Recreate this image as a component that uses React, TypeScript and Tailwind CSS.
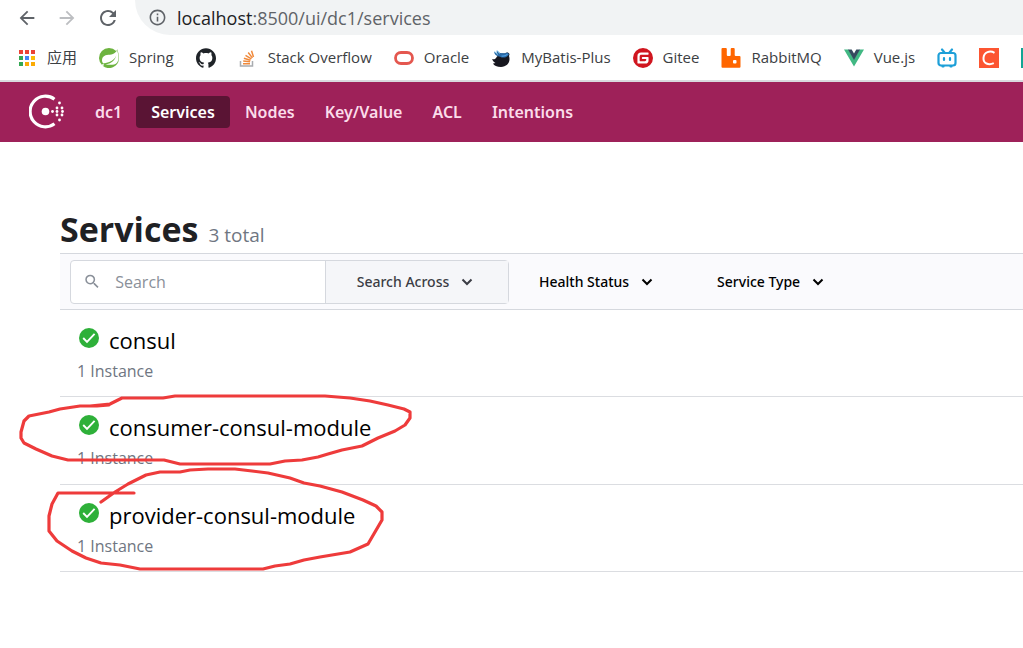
import type { ReactNode } from "react";
import { SiGitee, SiGithub, SiSpring } from "react-icons/si";
import { MdArrowBack, MdArrowForward, MdInfoOutline, MdRefresh, MdSearch } from "react-icons/md";

const appColors = [
  "#ea4335", "#ea4335", "#ea4335",
  "#34a853", "#4285f4", "#fbbc05",
  "#34a853", "#fbab05", "#fbab05",
];

function AppsIcon() {
  return (
    <svg viewBox="0 0 20 20" className="w-5 h-5">
      {appColors.map((c, i) => (
        <rect key={i} x={2 + (i % 3) * 6} y={2 + Math.floor(i / 3) * 6} width="4" height="4" fill={c} />
      ))}
    </svg>
  );
}

function StackOverflowIcon() {
  return (
    <svg viewBox="0 0 20 20" className="w-5 h-5" fill="none">
      <path d="M2.500 13v5h12v-5" stroke="#a9acb0" strokeWidth="1.500" />
      <path
        d="M5 15.700h7M5.200 13.100l6.900.7M5.900 10.300l6.600 2M7.500 7.300l5.900 3.600M10.200 4.500l4.200 5.400M13.500 2.800l2 6.200"
        stroke="#f08a3c"
        strokeWidth="1.500"
      />
    </svg>
  );
}

function OracleIcon() {
  return (
    <svg viewBox="0 0 20 20" className="w-5 h-5" fill="none">
      <rect x="1.5" y="4.5" width="17" height="11" rx="5.5" stroke="#e4574f" strokeWidth="2.8" />
    </svg>
  );
}

function MyBatisIcon() {
  return (
    <svg viewBox="0 0 20 20" className="w-5 h-5">
      <path d="M1 11c2 .8 3.500.2 5-2.500l3-2.500 5-.5c2-1.500 3.500-1 4.500.5l-.5 2c2 6-2 11-8 11-4 0-7-1.500-8-3.500l2.500-.5C2.800 14 1.500 12.500 1 11z" fill="#17171f" />
      <path d="M3 4l3 1L5.500 2.500 9 5l5 .2c2-1 3.500-.4 4 1-1.500 3.300-6 4.300-9 2.500C6.500 8.500 4 7.500 3 4z" fill="#2a6aa6" />
      <path d="M3.500 3.500l3.500 3M6.500 2.500l2 3" stroke="#8fd0f2" strokeWidth="1" />
      <path d="M10.500 8c2.500.3 5-.6 6-2" stroke="#4d9be0" strokeWidth="1.200" fill="none" />
    </svg>
  );
}

function RabbitIcon() {
  return (
    <svg viewBox="0 0 20 20" className="w-5 h-5">
      <path
        d="M1.500 0h3.300q1 0 1 1v6q0 1 1 1h1.900q1 0 1-1V1q0-1 1-1h2q1 0 1 1v6q0 1 1 1H18.500q1 0 1 1v9.800q0 1-1 1h-17q-1 0-1-1V1q0-1 1-1z"
        fill="#ff6600"
      />
      <rect x="12" y="12" width="3.500" height="3.500" rx="1" fill="#fff" />
    </svg>
  );
}

function VueIcon() {
  return (
    <svg viewBox="0 0 20 20" className="w-5 h-5">
      <path d="M0 1.500h4.500L10 11l5.500-9.500H20L10 18.500z" fill="#41b883" />
      <path d="M4 1.500h3.700L10 5.500l2.300-4H16L10 12z" fill="#35495e" />
    </svg>
  );
}

function BilibiliIcon() {
  return (
    <svg viewBox="0 0 20 20" className="w-5 h-5" fill="none" stroke="#1d9fd8" strokeWidth="2.200" strokeLinecap="round">
      <rect x="1.500" y="5" width="17" height="12.500" rx="2.500" />
      <path d="M5 1.500L7.500 4.500M15 1.500L12.500 4.500M7 10v2M13 10v2M5.500 18.500h1M13.500 18.500h1" />
    </svg>
  );
}

function CsdnIcon() {
  return (
    <svg viewBox="0 0 20 20" className="w-5 h-5" fill="none">
      <rect width="20" height="20" fill="#fc5531" />
      <path d="M15.500 4.800c-4.500-2.600-10.500-.8-11 5-.4 5.600 5 7.800 10.300 5.400" stroke="#fff" strokeWidth="2" />
    </svg>
  );
}

function ConsulLogo() {
  const dots = [
    [30.5, 9], [28, 14], [33, 14], [23.5, 17.5], [28, 17.5], [33.5, 17.5],
    [28, 21], [33, 21], [30.5, 26],
  ];
  return (
    <svg viewBox="0 0 36 36" className="w-9 h-9" fill="#fff">
      <path d="M25.500 5.200A15.300 15.300 0 1 0 25.500 29.800" fill="none" stroke="#fff" strokeWidth="3.200" />
      <circle cx="16.500" cy="17.500" r="3.800" />
      {dots.map(([x, y]) => (
        <circle key={`${x}-${y}`} cx={x} cy={y} r="1.400" />
      ))}
    </svg>
  );
}

function Chevron() {
  return (
    <svg viewBox="0 0 12 12" className="w-3 h-3" fill="none" stroke="currentColor" strokeWidth="2">
      <path d="M1.500 3.500L6 8l4.500-4.500" />
    </svg>
  );
}

function CheckIcon() {
  return (
    <svg viewBox="0 0 20 20" className="mt-1 w-5 h-5 shrink-0">
      <circle cx="10" cy="10" r="10" fill="#2eb039" />
      <path d="M4.200 10l3.800 3.800 7.600-8" fill="none" stroke="#fff" strokeWidth="1.900" />
    </svg>
  );
}

const bookmarks: { label: string; text?: string; icon: ReactNode }[] = [
  { label: "Apps", text: "应用", icon: <AppsIcon /> },
  { label: "Spring", text: "Spring", icon: <SiSpring className="w-5 h-5 text-[#6db33f]" /> },
  { label: "GitHub", icon: <SiGithub className="w-5 h-5 text-[#1f2328]" /> },
  { label: "Stack Overflow", text: "Stack Overflow", icon: <StackOverflowIcon /> },
  { label: "Oracle", text: "Oracle", icon: <OracleIcon /> },
  { label: "MyBatis-Plus", text: "MyBatis-Plus", icon: <MyBatisIcon /> },
  { label: "Gitee", text: "Gitee", icon: <SiGitee className="w-5 h-5 text-[#d0161f]" /> },
  { label: "RabbitMQ", text: "RabbitMQ", icon: <RabbitIcon /> },
  { label: "Vue.js", text: "Vue.js", icon: <VueIcon /> },
  { label: "Bilibili", icon: <BilibiliIcon /> },
  { label: "CSDN", icon: <CsdnIcon /> },
  { label: "More", icon: <span className="block w-5 h-5 bg-[#12a594]" /> },
];

const navItems = ["Services", "Nodes", "Key/Value", "ACL", "Intentions"];

const services = ["consul", "consumer-consul-module", "provider-consul-module"];

export default function App() {
  return (
    <div className="relative min-h-screen overflow-hidden bg-white font-['Open_Sans','Noto_Sans_CJK_SC',sans-serif]">
      {/* Browser bar */}
      <div className="border-b-2 border-[#d9d9de]">
        <div className="flex h-[35px] items-center pl-4">
          <div className="flex w-[119px] shrink-0 items-center gap-[18px] text-[#5f6368]">
            <button aria-label="Back"><MdArrowBack size={22} /></button>
            <button aria-label="Forward" className="text-[#bcbec1]"><MdArrowForward size={22} /></button>
            <button aria-label="Reload"><MdRefresh size={24} /></button>
          </div>
          <div className="flex h-full flex-1 items-center gap-2.5 rounded-bl-full bg-[#f1f3f4] pl-[13px] text-[#5f6368]">
            <MdInfoOutline size={19} />
            <span className="text-lg">
              <span className="text-[#202124]">localhost</span>:8500/ui/dc1/services
            </span>
          </div>
        </div>
        <div className="flex h-[45px] items-center gap-[22px] whitespace-nowrap pl-[17px] text-[15px] text-[#3c4043]">
          {bookmarks.map((b) => (
            <a key={b.label} href="#" aria-label={b.label} className="flex shrink-0 items-center gap-2.5">
              {b.icon}
              {b.text && <span>{b.text}</span>}
            </a>
          ))}
        </div>
      </div>

      {/* Consul header */}
      <nav className="flex h-[60px] items-center bg-[#9e2159] pl-[29px] font-['Noto_Sans',sans-serif] text-base font-semibold text-[#fbdcea]">
        <a href="#" aria-label="Consul"><ConsulLogo /></a>
        <a href="#" className="ml-[30px] mr-3.5">dc1</a>
        {navItems.map((item) => (
          <a
            key={item}
            href="#"
            className={`rounded px-[15px] py-1 ${item === "Services" ? "bg-[#5a1434] text-white" : ""}`}
          >
            {item}
          </a>
        ))}
      </nav>

      {/* Page */}
      <main className="pl-[60px] pt-16">
        <header className="flex h-[47px] items-baseline gap-2.5 leading-[47px]">
          <h1 className="text-[34px] font-bold text-[#1f2124]">Services</h1>
          <span className="text-[19px] text-[#6f7682]">3 total</span>
        </header>

        <div className="flex h-[57px] items-center border-y border-[#d5d8de] bg-[#fafafd] pl-2.5 font-['Noto_Sans',sans-serif] text-sm font-medium text-black">
          <div className="flex h-11 w-[439px] rounded-sm border border-[#d5d8de] bg-white">
            <label className="flex flex-1 items-center gap-3.5 pl-3 text-[#8a9099]">
              <MdSearch size={21} />
              <input
                type="text"
                aria-label="Search"
                placeholder="Search"
                className="w-full min-w-0 font-['Open_Sans',sans-serif] text-base font-normal outline-none placeholder:text-[#8a9099]"
              />
            </label>
            <button className="flex w-[183px] items-center justify-center gap-3 border-l border-[#d5d8de] bg-[#f5f6f9] pr-1 text-[#3b3d45]">
              Search Across <Chevron />
            </button>
          </div>
          <button className="ml-[30px] flex items-center gap-3">Health Status <Chevron /></button>
          <button className="ml-16 flex items-center gap-3">Service Type <Chevron /></button>
        </div>

        <ul>
          {services.map((name, i) => (
            <li
              key={name}
              className={`border-b border-[#dbdde1] pl-[17px] pt-3.5 ${i === 1 ? "h-[88px]" : "h-[87px]"}`}
            >
              <a href="#" className="flex gap-2.5 pl-0.5 text-[22px] font-medium leading-8 text-black">
                <CheckIcon />
                {name}
              </a>
              <p className="text-base leading-[30px] text-[#6f7682]">1 Instance</p>
            </li>
          ))}
        </ul>
      </main>

      {/* Hand-drawn marks */}
      <svg
        viewBox="0 0 1023 648"
        className="pointer-events-none absolute left-0 top-0 h-[648px] w-[1023px]"
        fill="none"
        stroke="#ee3b3b"
        strokeWidth="3.200"
        strokeLinecap="round"
        strokeLinejoin="round"
      >
        <path d="M109 405L97 406H80L60 409L49 412L29 416L24 421L21 432V438L24 443L36 449L52 456L68 460H164L180 464H270L285 461L302 460L318 457L328 454L342 450L362 446L378 438L395 431L405 425L410 418L410 412L404 409L388 405L370 401L350 398L325 396H175L163 398H122L110 404L90 406" />
        <path d="M134 493H58L52 504L49 516V531L57 541L72 551L86 558L101 563L120 565L140 569H263L275 566L290 564L304 560L320 557L350 552L368 544L375 532L382 520L382 512L376 506L363 500L342 492L320 486L304 483L290 478L268 473L252 471L235 469H208L190 470L180 472L160 472L146 475L128 484L115 492L101 502" />
      </svg>
    </div>
  );
}
